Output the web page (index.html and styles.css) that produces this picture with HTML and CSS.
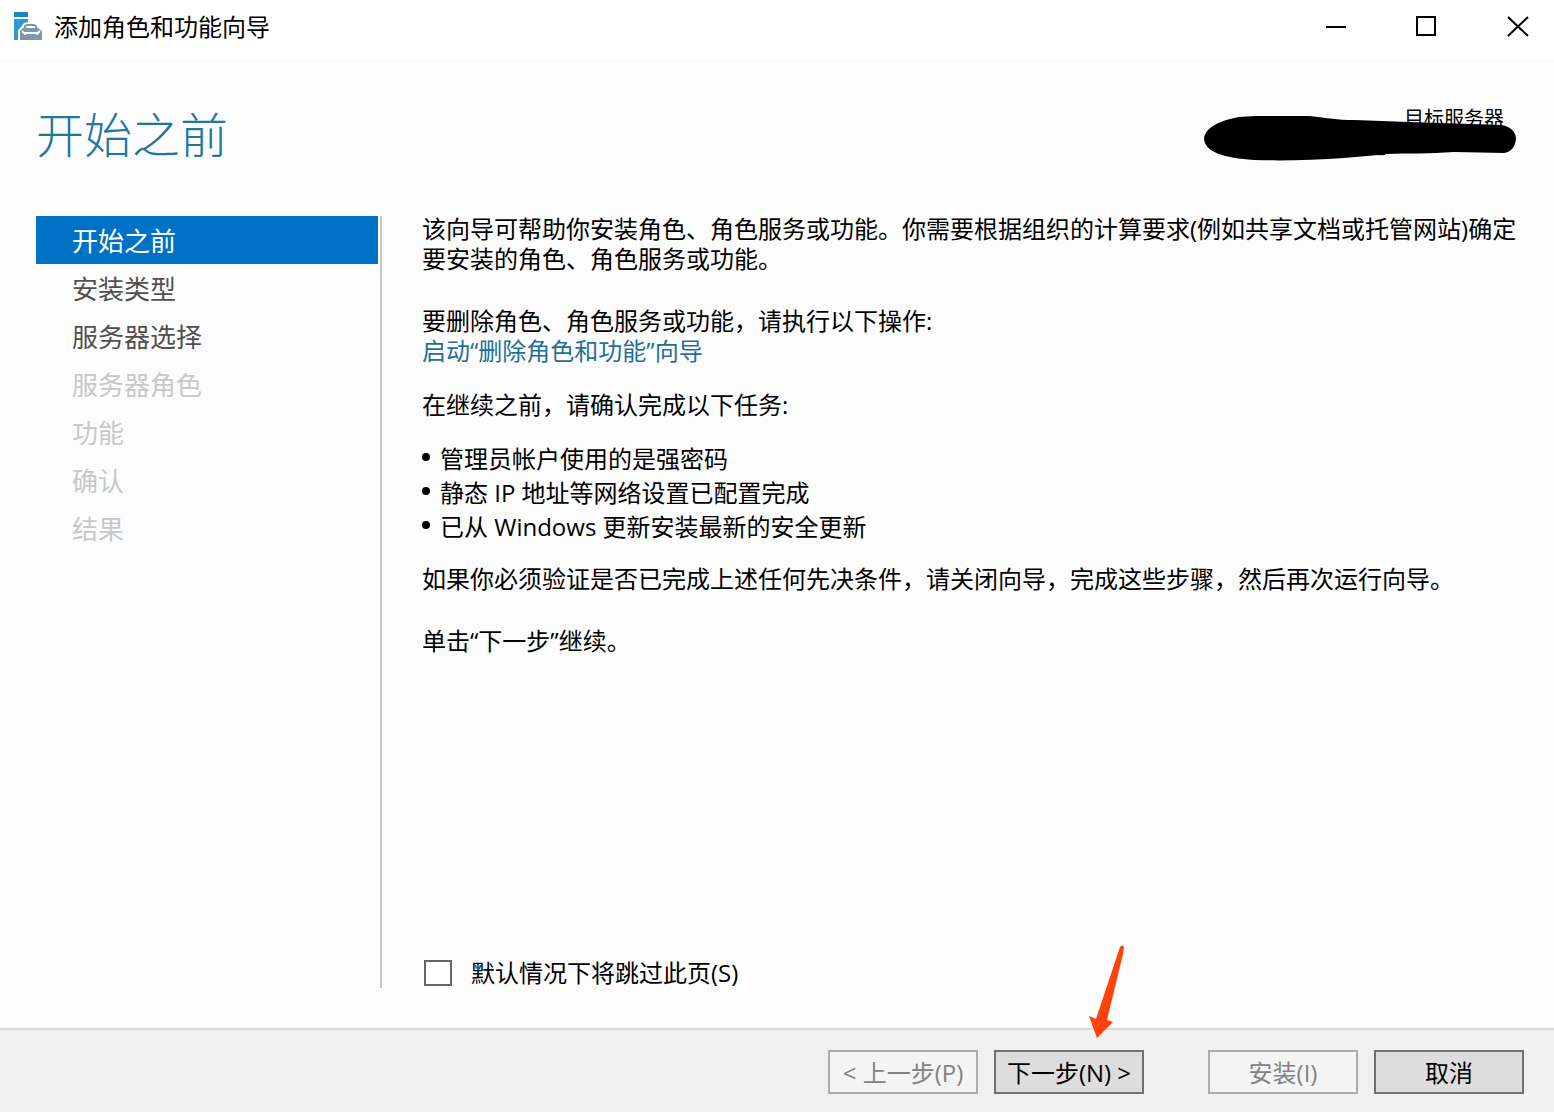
FILE: index.html
```html
<!DOCTYPE html>
<html lang="zh-CN">
<head>
<meta charset="utf-8">
<meta name="viewport" content="width=device-width, initial-scale=1">
<title>添加角色和功能向导</title>
<link rel="stylesheet" href="styles.css">
</head>
<body>
<div class="wizard">
  <header class="titlebar">
    <svg class="app-icon" width="30" height="30" viewBox="0 0 30 30" aria-hidden="true">
      <path fill="#1a86c8" d="M2 0h14v5H2z"/>
      <path fill="#2b9ad6" d="M2 7h14v3l-4 1-3 4-3 3v10H2z"/>
      <path fill="none" stroke="#7b98aa" stroke-width="2" d="M13 17v-3l2-1h7l2 1v3"/>
      <path fill="#7b98aa" d="M11 16h15l4 3v9H8v-9z"/>
      <path fill="none" stroke="#fff" stroke-width="2" d="M10 19l2 2h14l2-2M13 21v2M25 21v2"/>
    </svg>
    <span class="titlebar-text">添加角色和功能向导</span>
    <div class="window-controls">
      <button type="button" class="window-button" aria-label="最小化"><svg width="22" height="22" viewBox="0 0 22 22"><path d="M1 11h20"/></svg></button>
      <button type="button" class="window-button" aria-label="最大化"><svg width="22" height="22" viewBox="0 0 22 22"><path d="M1 1h18v18H1z"/></svg></button>
      <button type="button" class="window-button" aria-label="关闭"><svg width="22" height="22" viewBox="0 0 22 22"><path d="M1 1l20 19M21 1L1 20"/></svg></button>
    </div>
  </header>

  <div class="page-header">
    <h1 class="page-title">开始之前</h1>
    <div class="target">
      <span class="target-label">目标服务器</span>
      <svg class="target-mask" width="312" height="46" viewBox="0 0 312 46" aria-hidden="true">
        <path d="M0 23C1 12 14 5 35 1C55-1 85 0 105 0C125 2 132 4 150 4L205 6L298 9C308 11 312 17 312 23C311 31 307 36 300 37L250 36C225 38 205 37 182 38Q180 40 174 39L140 42C110 44 80 45 50 44C20 42 1 36 0 23Z"/>
      </svg>
    </div>
  </div>

  <div class="body">
    <nav class="steps" aria-label="向导步骤">
      <button type="button" class="step step-current" aria-current="step">开始之前</button>
      <button type="button" class="step">安装类型</button>
      <button type="button" class="step">服务器选择</button>
      <button type="button" class="step" disabled>服务器角色</button>
      <button type="button" class="step" disabled>功能</button>
      <button type="button" class="step" disabled>确认</button>
      <button type="button" class="step" disabled>结果</button>
    </nav>
    <main class="content">
      <p class="text">该向导可帮助你安装角色、角色服务或功能。你需要根据组织的计算要求(例如共享文档或托管网站)确定要安装的角色、角色服务或功能。</p>
      <p class="text text-spaced">要删除角色、角色服务或功能，请执行以下操作:<br><a class="link" href="#remove">启动“删除角色和功能”向导</a></p>
      <p class="text text-intro">在继续之前，请确认完成以下任务:</p>
      <ul class="tasks">
        <li class="task">管理员帐户使用的是强密码</li>
        <li class="task">静态 IP 地址等网络设置已配置完成</li>
        <li class="task">已从 Windows 更新安装最新的安全更新</li>
      </ul>
      <p class="text">如果你必须验证是否已完成上述任何先决条件，请关闭向导，完成这些步骤，然后再次运行向导。</p>
      <p class="text text-spaced">单击“下一步”继续。</p>
      <label class="skip"><input class="skip-box" type="checkbox">默认情况下将跳过此页(S)</label>
    </main>
  </div>

  <footer class="footer">
    <div class="button-pair">
      <button type="button" class="button" disabled>&lt; 上一步(P)</button>
      <div class="next">
        <button type="button" class="button">下一步(N) &gt;</button>
        <svg class="arrow" width="45" height="100" viewBox="0 0 45 100" aria-hidden="true">
          <path fill="#ff4208" d="M35 7Q37 4 39 7L38 14L22 80L28 82L12 98L4 76L11 79Z"/>
        </svg>
      </div>
    </div>
    <div class="button-pair">
      <button type="button" class="button" disabled>安装(I)</button>
      <button type="button" class="button">取消</button>
    </div>
  </footer>
</div>
</body>
</html>
```
FILE: styles.css
```css
* {
  box-sizing: border-box;
}

body {
  margin: 0;
  background: #fcfcfc;
  color: #000;
  font-family: "Open Sans", "Noto Sans CJK SC", sans-serif;
  font-size: 24px;
  line-height: 30px;
}

button {
  font: inherit;
  color: inherit;
}

.wizard {
  display: flex;
  flex-direction: column;
  min-height: 100vh;
}

.titlebar {
  display: flex;
  align-items: center;
  padding: 0 0 4px 12px;
  height: 58px;
  background: #fff;
}

.titlebar-text {
  margin-left: 12px;
}

.window-controls {
  display: flex;
  gap: 19px;
  margin-left: auto;
}

.window-button {
  display: flex;
  align-items: center;
  justify-content: center;
  width: 72px;
  height: 52px;
  padding: 0;
  border: 0;
  background: none;
}

.window-button svg {
  fill: none;
  stroke: #000;
  stroke-width: 2;
}

.page-header {
  display: flex;
  justify-content: space-between;
  align-items: flex-start;
  padding: 47px 38px 0 36px;
  height: 156px;
}

.page-title {
  margin: 0;
  color: #23779b;
  font-size: 48px;
  font-weight: 300;
  line-height: 60px;
}

.target {
  position: relative;
  width: 312px;
  padding-right: 12px;
  font-size: 20px;
  line-height: 28px;
  text-align: right;
}

.target-mask {
  position: absolute;
  top: 11px;
  left: 0;
}

.body {
  display: flex;
  flex: 1;
  padding: 0 30px 40px 36px;
}

.steps {
  display: flex;
  flex-direction: column;
  width: 346px;
  margin-top: 2px;
  padding-right: 2px;
  border-right: 2px solid #c8c8c8;
}

.step {
  height: 48px;
  padding: 2px 36px 0;
  border: 0;
  background: none;
  color: #505050;
  font-size: 26px;
  line-height: 46px;
  text-align: left;
}

.step:disabled {
  color: #c8c8cb;
}

.step-current {
  background: #0072c6;
  color: #fff;
}

.content {
  display: flex;
  flex: 1;
  flex-direction: column;
  padding-left: 40px;
}

.text {
  margin: 0;
}

.text-spaced {
  margin-top: 32px;
}

.text-intro {
  margin-top: 24px;
}

.link {
  color: #1f7096;
  text-decoration: none;
}

.tasks {
  margin: 22px 0 20px;
  padding: 0;
  line-height: 34px;
  list-style: none;
}

.task {
  display: flex;
  align-items: center;
  gap: 10px;
}

.task::before {
  content: "";
  width: 8px;
  height: 8px;
  margin-bottom: 4px;
  border-radius: 50%;
  background: #000;
}

.skip {
  display: flex;
  align-items: center;
  gap: 19px;
  margin-top: auto;
  padding-left: 2px;
}

.skip-box {
  appearance: none;
  width: 28px;
  height: 26px;
  margin: 0;
  border: 2px solid #666;
  background: #fff;
}

.skip-box:checked {
  background: #666;
}

.footer {
  display: flex;
  justify-content: flex-end;
  gap: 64px;
  padding: 20px 30px 18px;
  border-top: 2px solid #d9d9d9;
  background: #f0f0f0;
}

.button-pair {
  display: flex;
  gap: 16px;
}

.button {
  width: 150px;
  height: 44px;
  padding: 2px 0 0;
  border: 2px solid #707070;
  background: #ddd;
  white-space: nowrap;
}

.button:disabled {
  border-color: #adadad;
  background: #f4f4f4;
  color: #838383;
}

.next {
  position: relative;
}

.arrow {
  position: absolute;
  bottom: 54px;
  left: 91px;
}
```
